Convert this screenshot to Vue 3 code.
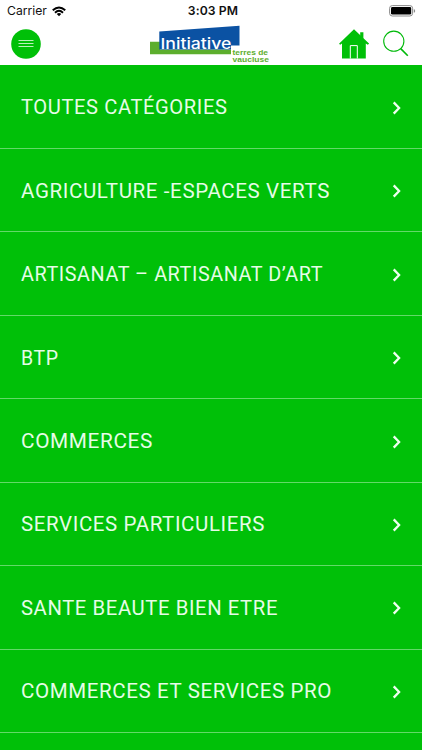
<script setup>
const categories = [
  { label: 'TOUTES CATÉGORIES', width: 206.5 },
  { label: 'AGRICULTURE -ESPACES VERTS', width: 309 },
  { label: 'ARTISANAT – ARTISANAT D’ART', width: 302 },
  { label: 'BTP', width: 37.5 },
  { label: 'COMMERCES', width: 132 },
  { label: 'SERVICES PARTICULIERS', width: 244 },
  { label: 'SANTE BEAUTE BIEN ETRE', width: 257 },
  { label: 'COMMERCES ET SERVICES PRO', width: 311 },
]
</script>

<template>
  <main class="screen">
    <div class="status">
      <div class="carrier">
        <span>Carrier</span>
        <svg class="wifi" width="14" height="11" viewBox="0 0 15 11">
          <g fill="none" stroke="#000" stroke-width="2">
            <path d="M.8 4.2Q7.5-1.9 14.2 4.2" />
            <path d="M3.2 6.8Q7.5 2.7 11.8 6.8" />
          </g>
          <path d="M5.1 8.2Q7.5 6.2 9.9 8.2L7.5 10.6Z" />
        </svg>
      </div>
      <span class="time">3:03 PM</span>
      <svg class="battery" width="27" height="12" viewBox="0 0 27 12">
        <rect x=".6" y=".6" width="23" height="10.4" rx="2.7" fill="#fff" stroke="#8b8b8b" />
        <rect x="2" y="2" width="20.2" height="7.6" rx="1.4" />
        <path d="M24.8 4v3.8q1.4-.5 1.4-1.9T24.8 4Z" fill="#8b8b8b" />
      </svg>
    </div>

    <header class="bar">
      <button class="menu" aria-label="Menu">
        <svg width="30" height="30" viewBox="0 0 30 30">
          <circle cx="15" cy="15" r="14.8" fill="#00c008" />
          <path d="M7.5 11.5h15M7.5 14.5h15M7.5 17.5h15" stroke="#b9f0bb" stroke-width="1" />
        </svg>
      </button>
      <svg class="logo" width="122" height="40" viewBox="149 23.5 122 40">
        <path d="M150 41.3H160V49H231V53.7H150Z" fill="#5cae2d" />
        <path d="M159.3 31 239.5 25.2V45H231V49H159.3Z" fill="#0b52a3" />
        <text class="brand" x="160.5" y="48.8" textLength="71" lengthAdjust="spacingAndGlyphs">Initiative</text>
        <text class="place" x="232.5" y="54" textLength="35.5" lengthAdjust="spacingAndGlyphs">terres de</text>
        <text class="place" x="232.5" y="61.1" textLength="36.5" lengthAdjust="spacingAndGlyphs">vaucluse</text>
      </svg>
      <div class="actions">
        <svg width="30" height="30" viewBox="339 28.5 30 30">
          <g fill="#00c008">
            <path d="M354 28.7 369.1 43.2 367.8 44.3 365.8 43V58H342V43L340.2 44.3 339 43.2Z" />
            <path d="M360.2 31.8h3.2v6.8l-3.2-3.1Z" />
          </g>
          <path d="M350.3 58V45.1h7V58" fill="none" stroke="#fff" />
        </svg>
        <svg width="27" height="28" viewBox="382 30 27 28">
          <g fill="none" stroke="#00b90a">
            <circle cx="393.8" cy="41.2" r="10.1" stroke-width="1.1" />
            <path d="M400.7 48.6 407.8 55.7" stroke-width="1.6" />
          </g>
        </svg>
      </div>
    </header>

    <ul class="list">
      <li v-for="item in categories" :key="item.label" class="row">
        <svg class="label" width="340" height="30">
          <text x="0" y="22.4" :textLength="item.width" lengthAdjust="spacingAndGlyphs">{{ item.label }}</text>
        </svg>
        <svg class="chevron" width="10" height="14" viewBox="0 0 10 14">
          <path d="M1.7 1.4 7.1 7 1.7 12.6" fill="none" stroke="#effff0" stroke-width="2.3" />
        </svg>
      </li>
    </ul>
  </main>
</template>

<style>
body {
  margin: 0;
  overflow: hidden;
}
</style>

<style scoped>
.screen {
  width: 422px;
  height: 750px;
  overflow: hidden;
  display: flex;
  flex-direction: column;
  background: #00c008;
  font-family: Inter, "Liberation Sans", sans-serif;
}
.status {
  height: 22px;
  flex: none;
  box-sizing: border-box;
  padding: 0 7px;
  display: grid;
  grid-template-columns: 1fr auto 1fr;
  align-items: center;
  background: #fff;
  color: #111;
  font-size: 12.2px;
  line-height: 22px;
}
.carrier {
  display: flex;
  align-items: center;
  gap: 5px;
}
.time {
  font-weight: 600;
  letter-spacing: 0.1px;
  padding-left: 4px;
}
.battery {
  justify-self: end;
  margin-right: -1px;
}
.bar {
  height: 43px;
  flex: none;
  box-sizing: border-box;
  padding: 0 13px 0 11px;
  display: grid;
  grid-template-columns: 1fr auto 1fr;
  align-items: center;
  background: #fff;
}
.menu {
  width: 30px;
  height: 30px;
  padding: 0;
  border: 0;
  background: none;
}
.menu svg {
  display: block;
}
.logo {
  display: block;
}
.brand {
  font-family: Inter, sans-serif;
  font-size: 15px;
  font-weight: 500;
  fill: #fff;
}
.place {
  font-family: "Liberation Sans", sans-serif;
  font-size: 7px;
  line-height: 1;
  font-weight: 700;
  fill: #5cae2d;
}
.actions {
  display: flex;
  justify-content: flex-end;
  align-items: center;
  gap: 13px;
}
.list {
  margin: 0;
  padding: 0.4px 0 0;
  list-style: none;
}
.row {
  height: 83.47px;
  box-sizing: border-box;
  padding: 1px 20px 0 21px;
  display: flex;
  align-items: center;
  justify-content: space-between;
  border-bottom: 1px solid #63d968;
}
.label {
  display: block;
  overflow: visible;
  font-family: Roboto, sans-serif;
  font-size: 20.3px;
  letter-spacing: 0.6px;
  fill: #e6fce7;
}
.chevron {
  display: block;
  margin-top: 1px;
}
</style>
